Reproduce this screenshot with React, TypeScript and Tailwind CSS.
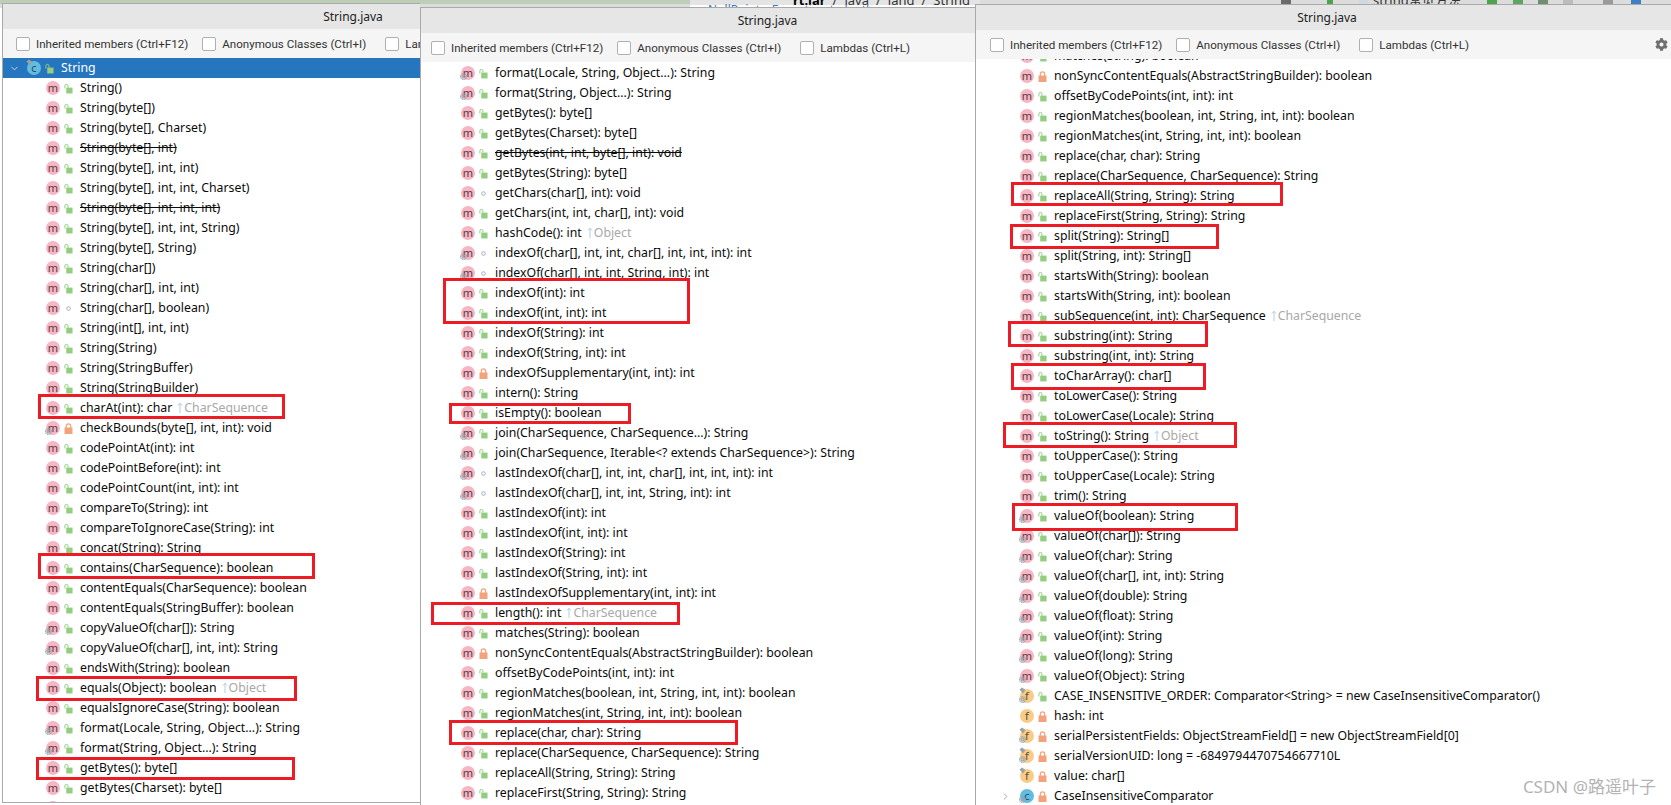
import React from "react";
import { ChevronDown, ChevronRight } from "lucide-react";
import { FaCog } from "react-icons/fa";

type Access = "pub" | "priv" | "pkg";

interface Member {
  t: string;
  a?: Access; // defaults to pub
  s?: boolean; // static, gear at the lower left of the icon
  f?: boolean; // final, pin at the upper left of the icon
  dep?: boolean;
  up?: string; // inherited from
  kind?: "m" | "f" | "c";
  open?: "down" | "right";
}

const leftMembers: Member[] = [
  { t: "String()" },
  { t: "String(byte[])" },
  { t: "String(byte[], Charset)" },
  { t: "String(byte[], int)", dep: true },
  { t: "String(byte[], int, int)" },
  { t: "String(byte[], int, int, Charset)" },
  { t: "String(byte[], int, int, int)", dep: true },
  { t: "String(byte[], int, int, String)" },
  { t: "String(byte[], String)" },
  { t: "String(char[])" },
  { t: "String(char[], int, int)" },
  { t: "String(char[], boolean)", a: "pkg" },
  { t: "String(int[], int, int)" },
  { t: "String(String)" },
  { t: "String(StringBuffer)" },
  { t: "String(StringBuilder)" },
  { t: "charAt(int): char", up: "CharSequence" },
  { t: "checkBounds(byte[], int, int): void", a: "priv", s: true },
  { t: "codePointAt(int): int" },
  { t: "codePointBefore(int): int" },
  { t: "codePointCount(int, int): int" },
  { t: "compareTo(String): int" },
  { t: "compareToIgnoreCase(String): int" },
  { t: "concat(String): String" },
  { t: "contains(CharSequence): boolean" },
  { t: "contentEquals(CharSequence): boolean" },
  { t: "contentEquals(StringBuffer): boolean" },
  { t: "copyValueOf(char[]): String", s: true },
  { t: "copyValueOf(char[], int, int): String", s: true },
  { t: "endsWith(String): boolean" },
  { t: "equals(Object): boolean", up: "Object" },
  { t: "equalsIgnoreCase(String): boolean" },
  { t: "format(Locale, String, Object...): String", s: true },
  { t: "format(String, Object...): String", s: true },
  { t: "getBytes(): byte[]" },
  { t: "getBytes(Charset): byte[]" },
  { t: "getBytes(int, int, byte[], int): void", dep: true },
];

const middleMembers: Member[] = [
  { t: "format(Locale, String, Object...): String", s: true },
  { t: "format(String, Object...): String", s: true },
  { t: "getBytes(): byte[]" },
  { t: "getBytes(Charset): byte[]" },
  { t: "getBytes(int, int, byte[], int): void", dep: true },
  { t: "getBytes(String): byte[]" },
  { t: "getChars(char[], int): void", a: "pkg" },
  { t: "getChars(int, int, char[], int): void" },
  { t: "hashCode(): int", up: "Object" },
  { t: "indexOf(char[], int, int, char[], int, int, int): int", a: "pkg", s: true },
  { t: "indexOf(char[], int, int, String, int): int", a: "pkg", s: true },
  { t: "indexOf(int): int" },
  { t: "indexOf(int, int): int" },
  { t: "indexOf(String): int" },
  { t: "indexOf(String, int): int" },
  { t: "indexOfSupplementary(int, int): int", a: "priv" },
  { t: "intern(): String" },
  { t: "isEmpty(): boolean" },
  { t: "join(CharSequence, CharSequence...): String", s: true },
  { t: "join(CharSequence, Iterable<? extends CharSequence>): String", s: true },
  { t: "lastIndexOf(char[], int, int, char[], int, int, int): int", a: "pkg", s: true },
  { t: "lastIndexOf(char[], int, int, String, int): int", a: "pkg", s: true },
  { t: "lastIndexOf(int): int" },
  { t: "lastIndexOf(int, int): int" },
  { t: "lastIndexOf(String): int" },
  { t: "lastIndexOf(String, int): int" },
  { t: "lastIndexOfSupplementary(int, int): int", a: "priv" },
  { t: "length(): int", up: "CharSequence" },
  { t: "matches(String): boolean" },
  { t: "nonSyncContentEquals(AbstractStringBuilder): boolean", a: "priv" },
  { t: "offsetByCodePoints(int, int): int" },
  { t: "regionMatches(boolean, int, String, int, int): boolean" },
  { t: "regionMatches(int, String, int, int): boolean" },
  { t: "replace(char, char): String" },
  { t: "replace(CharSequence, CharSequence): String" },
  { t: "replaceAll(String, String): String" },
  { t: "replaceFirst(String, String): String" },
];

const rightMembers: Member[] = [
  { t: "matches(String): boolean" },
  { t: "nonSyncContentEquals(AbstractStringBuilder): boolean", a: "priv" },
  { t: "offsetByCodePoints(int, int): int" },
  { t: "regionMatches(boolean, int, String, int, int): boolean" },
  { t: "regionMatches(int, String, int, int): boolean" },
  { t: "replace(char, char): String" },
  { t: "replace(CharSequence, CharSequence): String" },
  { t: "replaceAll(String, String): String" },
  { t: "replaceFirst(String, String): String" },
  { t: "split(String): String[]" },
  { t: "split(String, int): String[]" },
  { t: "startsWith(String): boolean" },
  { t: "startsWith(String, int): boolean" },
  { t: "subSequence(int, int): CharSequence", up: "CharSequence" },
  { t: "substring(int): String" },
  { t: "substring(int, int): String" },
  { t: "toCharArray(): char[]" },
  { t: "toLowerCase(): String" },
  { t: "toLowerCase(Locale): String" },
  { t: "toString(): String", up: "Object" },
  { t: "toUpperCase(): String" },
  { t: "toUpperCase(Locale): String" },
  { t: "trim(): String" },
  { t: "valueOf(boolean): String", s: true },
  { t: "valueOf(char[]): String", s: true },
  { t: "valueOf(char): String", s: true },
  { t: "valueOf(char[], int, int): String", s: true },
  { t: "valueOf(double): String", s: true },
  { t: "valueOf(float): String", s: true },
  { t: "valueOf(int): String", s: true },
  { t: "valueOf(long): String", s: true },
  { t: "valueOf(Object): String", s: true },
  { t: "CASE_INSENSITIVE_ORDER: Comparator<String> = new CaseInsensitiveComparator()", kind: "f", s: true, f: true },
  { t: "hash: int", kind: "f", a: "priv" },
  { t: "serialPersistentFields: ObjectStreamField[] = new ObjectStreamField[0]", kind: "f", a: "priv", s: true, f: true },
  { t: "serialVersionUID: long = -6849794470754667710L", kind: "f", a: "priv", s: true, f: true },
  { t: "value: char[]", kind: "f", a: "priv", f: true },
  { t: "CaseInsensitiveComparator", kind: "c", a: "priv", s: true, open: "right" },
];

const redBoxes = [
  "left-[38px] top-[394px] w-[247px] h-[25px]",
  "left-[38px] top-[553px] w-[277px] h-[26px]",
  "left-[36px] top-[676px] w-[261px] h-[25px]",
  "left-[36px] top-[757px] w-[259px] h-[23px]",
  "left-[443px] top-[278px] w-[247px] h-[46px]",
  "left-[449px] top-[403px] w-[182px] h-[21px]",
  "left-[431px] top-[602px] w-[249px] h-[23px]",
  "left-[449px] top-[720px] w-[289px] h-[25px]",
  "left-[1011px] top-[182px] w-[272px] h-[24px]",
  "left-[1010px] top-[224px] w-[209px] h-[25px]",
  "left-[1008px] top-[321px] w-[200px] h-[26px]",
  "left-[1011px] top-[363px] w-[195px] h-[27px]",
  "left-[1003px] top-[422px] w-[234px] h-[26px]",
  "left-[1012px] top-[503px] w-[226px] h-[28px]",
];

const Lock = ({ a }: { a: Access }) => {
  if (a === "pkg") {
    return (
      <svg width="9" height="11" viewBox="0 0 9 11">
        <circle cx="4.5" cy="5.5" r="1.8" fill="none" stroke="#a4b0b8" strokeWidth="1" />
      </svg>
    );
  }
  if (a === "priv") {
    return (
      <svg width="9" height="11" viewBox="0 0 9 11">
        <rect x="0.5" y="4.5" width="8" height="6.5" fill="#f4a27c" />
        <path d="M2.3 5V3a2.2 2.2 0 0 1 4.4 0v2" fill="none" stroke="#f4a27c" strokeWidth="1.2" />
      </svg>
    );
  }
  return (
    <svg width="10" height="11" viewBox="0 0 10 11">
      <rect x="2.5" y="4.5" width="7" height="6.5" fill="#93cd80" />
      <path d="M1 5.5V2.6a1.7 1.7 0 0 1 3.4 0v2" fill="none" stroke="#93cd80" strokeWidth="1.1" />
    </svg>
  );
};

const Gear = () => (
  <svg width="7" height="7" viewBox="0 0 8 8" className="absolute -left-[1px] top-[7px]">
    <circle cx="4" cy="4" r="3.4" fill="none" stroke="#93a3ae" strokeWidth="1.2" strokeDasharray="1.3 0.6" />
    <circle cx="4" cy="4" r="1.8" fill="none" stroke="#93a3ae" strokeWidth="1.2" />
  </svg>
);

const Pin = () => (
  <svg width="7" height="7" viewBox="0 0 7 7" className="absolute -left-[1px] -top-[2px]">
    <path d="M0.5 2.5L3 0.5L6.5 3L4 6.5Z" fill="#9aa3a8" />
  </svg>
);

const KindIcon = ({ kind = "m", s, f }: { kind?: "m" | "f" | "c"; s?: boolean; f?: boolean }) => (
  <span
    className={`relative flex h-[14px] w-[14px] shrink-0 items-center justify-center rounded-full pb-[1px] text-[11px] ${
      kind === "m"
        ? "bg-[#f7b6c4] text-[#5a3a40]"
        : kind === "f"
          ? "bg-[#f8cc88] text-[#5d4a2c]"
          : "bg-[#62bce0] text-[#2a4a5a]"
    }`}
  >
    {kind}
    {f && <Pin />}
    {s && <Gear />}
  </span>
);

const Row = ({ m, pad }: { m: Member; pad: string }) => (
  <div className={`flex h-5 shrink-0 items-center whitespace-nowrap ${pad}`}>
    {m.open === "right" && (
      <span className="flex w-5 shrink-0 items-center text-[#7f7f7f]">
        <ChevronRight size={11} strokeWidth={1.5} />
      </span>
    )}
    <KindIcon kind={m.kind} s={m.s} f={m.f} />
    <span className="ml-[4px] flex w-[9px] shrink-0 justify-center">
      <Lock a={m.a ?? "pub"} />
    </span>
    <span className={`ml-[7px] text-[#0a0a0a] ${m.dep ? "line-through" : ""}`}>{m.t}</span>
    {m.up && (
      <span className="ml-[5px] flex items-center text-[#a8a8a8]">
        <svg width="6" height="12" viewBox="0 0 6 12" className="mr-[1px]">
          <path d="M3 11V1.5M1 3.5L3 1.2L5 3.5" fill="none" stroke="#b0cde2" strokeWidth="1" />
        </svg>
        {m.up}
      </span>
    )}
  </div>
);

const Check = ({ label, gap }: { label: string; gap: string }) => (
  <label className={`flex items-center gap-[6px] ${gap}`}>
    <span className="h-[14px] w-[14px] shrink-0 rounded-[2px] border border-[#b0b0b0] bg-white" />
    {label}
  </label>
);

const Panel = ({
  outer,
  inner,
  bar,
  gear,
  children,
}: {
  outer: string;
  inner: string;
  bar: string;
  gear?: boolean;
  children: React.ReactNode;
}) => (
  <div className={`shrink-0 overflow-hidden border-t border-l border-[#a9a9a9] bg-white ${outer}`}>
    <div className={`flex h-full flex-col ${inner}`}>
      <div className="flex h-[25px] shrink-0 items-center justify-center bg-[#e6e6e6] text-[12px] text-[#222]">
        String.java
      </div>
      <div
        className={`relative z-10 flex h-[29px] shrink-0 items-center whitespace-nowrap bg-[#f5f5f5] text-[11.6px] text-[#333] [font-family:Roboto,sans-serif] ${bar}`}
      >
        <Check gap="ml-0" label="Inherited members (Ctrl+F12)" />
        <Check gap="ml-[14px]" label="Anonymous Classes (Ctrl+I)" />
        <Check gap="ml-[19px]" label="Lambdas (Ctrl+L)" />
        {gear && <FaCog size={13} className="ml-auto mr-[10px] text-[#6e6e6e]" />}
      </div>
      <div className="flex min-h-0 flex-1 flex-col overflow-hidden">{children}</div>
    </div>
  </div>
);

// the IDE showing behind the three popups, only its lowest few pixels are visible
const IdeStrip = () => (
  <div className="absolute inset-x-0 top-0 flex h-[8px] overflow-hidden bg-[#dcdcdc] text-[13px] leading-[10px]">
    <div className="h-[4px] w-[690px] shrink-0 bg-[#bccdb8]" />
    <div className="flex w-[290px] shrink-0 flex-col">
      <div className="-mt-[5px] flex h-[10px] shrink-0 gap-[7px] bg-[#e4e4e4] pl-[103px] text-[#333]">
        <span className="font-bold text-black">rt.jar</span>
        <span>/</span>
        <span>java</span>
        <span>/</span>
        <span>lang</span>
        <span>/</span>
        <span>String</span>
      </div>
      <div className="flex-1 bg-white pl-[18px] text-[12px] text-[#3a78c8]">NullPointerException to be thrown</div>
    </div>
    <div className="-mt-[5px] flex flex-1 items-start pl-[301px] text-[#333]">
      <span className="mt-[4px] h-[6px] w-[10px] shrink-0 bg-[#6b6b6b]" />
      <span className="ml-[36px] mt-[4px] h-[6px] w-[6px] shrink-0 bg-[#4fa34f]" />
      <span className="ml-[26px] mt-[4px] h-[6px] w-[10px] shrink-0 bg-[#d0d8e0]" />
      <span className="ml-[4px] shrink-0">string常见方法</span>
      <span className="ml-[26px] mt-[4px] h-[6px] w-[10px] shrink-0 bg-[#4fa34f]" />
      <span className="ml-[16px] mt-[4px] h-[6px] w-[10px] shrink-0 bg-[#5ea55e]" />
      <span className="ml-[15px] mt-[4px] h-[6px] w-[10px] shrink-0 bg-[#6f8f6f]" />
      <span className="ml-[15px] mt-[4px] h-[6px] w-[10px] shrink-0 bg-[#bdbdbd]" />
      <span className="ml-[30px] mt-[4px] h-[6px] w-[10px] shrink-0 bg-[#9a9a9a]" />
      <span className="ml-[18px] mt-[4px] h-[6px] w-[10px] shrink-0 bg-[#3f7fc4]" />
    </div>
  </div>
);

export default function App() {
  return (
    <div className="relative flex h-[805px] w-full items-start overflow-hidden bg-white text-[12.3px] leading-5 [font-family:'Noto_Sans','Noto_Sans_CJK_SC',sans-serif]">
      <IdeStrip />
      <div className="relative ml-[2px] mt-[3px]">
        <Panel outer="h-[800px] w-[418px] border-b" inner="w-[700px]" bar="pl-[13px]">
          <div className="flex h-5 shrink-0 items-center whitespace-nowrap bg-[#2675bf] pl-[6px] text-white">
            <span className="flex w-[18px] shrink-0 items-center">
              <ChevronDown size={11} strokeWidth={1.5} />
            </span>
            <KindIcon kind="c" f />
            <span className="ml-[4px] flex w-[9px] shrink-0 justify-center">
              <Lock a="pub" />
            </span>
            <span className="ml-[7px]">String</span>
          </div>
          {leftMembers.map((m, i) => (
            <Row key={i} m={m} pad="pl-[43px]" />
          ))}
        </Panel>
      </div>
      <div className="relative mt-[7px]">
        <Panel outer="h-[798px] w-[555px]" inner="w-[693px]" bar="pl-[10px]">
          <div className="h-[1px] shrink-0" />
          {middleMembers.map((m, i) => (
            <Row key={i} m={m} pad="pl-[40px]" />
          ))}
        </Panel>
      </div>
      <div className="relative mt-[4px] min-w-0 flex-1">
        <Panel outer="h-[801px] w-full" inner="w-[702px]" bar="pl-[14px]" gear>
          <div className="-mt-[13px] flex shrink-0 flex-col">
            {rightMembers.map((m, i) => (
              <Row key={i} m={m} pad={m.open ? "pl-[24px]" : "pl-[44px]"} />
            ))}
          </div>
        </Panel>
      </div>
      {redBoxes.map((b) => (
        <div key={b} className={`absolute border-[3px] border-[#ed1c24] ${b}`} />
      ))}
      <div className="absolute bottom-[8px] right-[15px] text-[17px] text-[#b3b3b3]">CSDN @路遥叶子</div>
    </div>
  );
}
